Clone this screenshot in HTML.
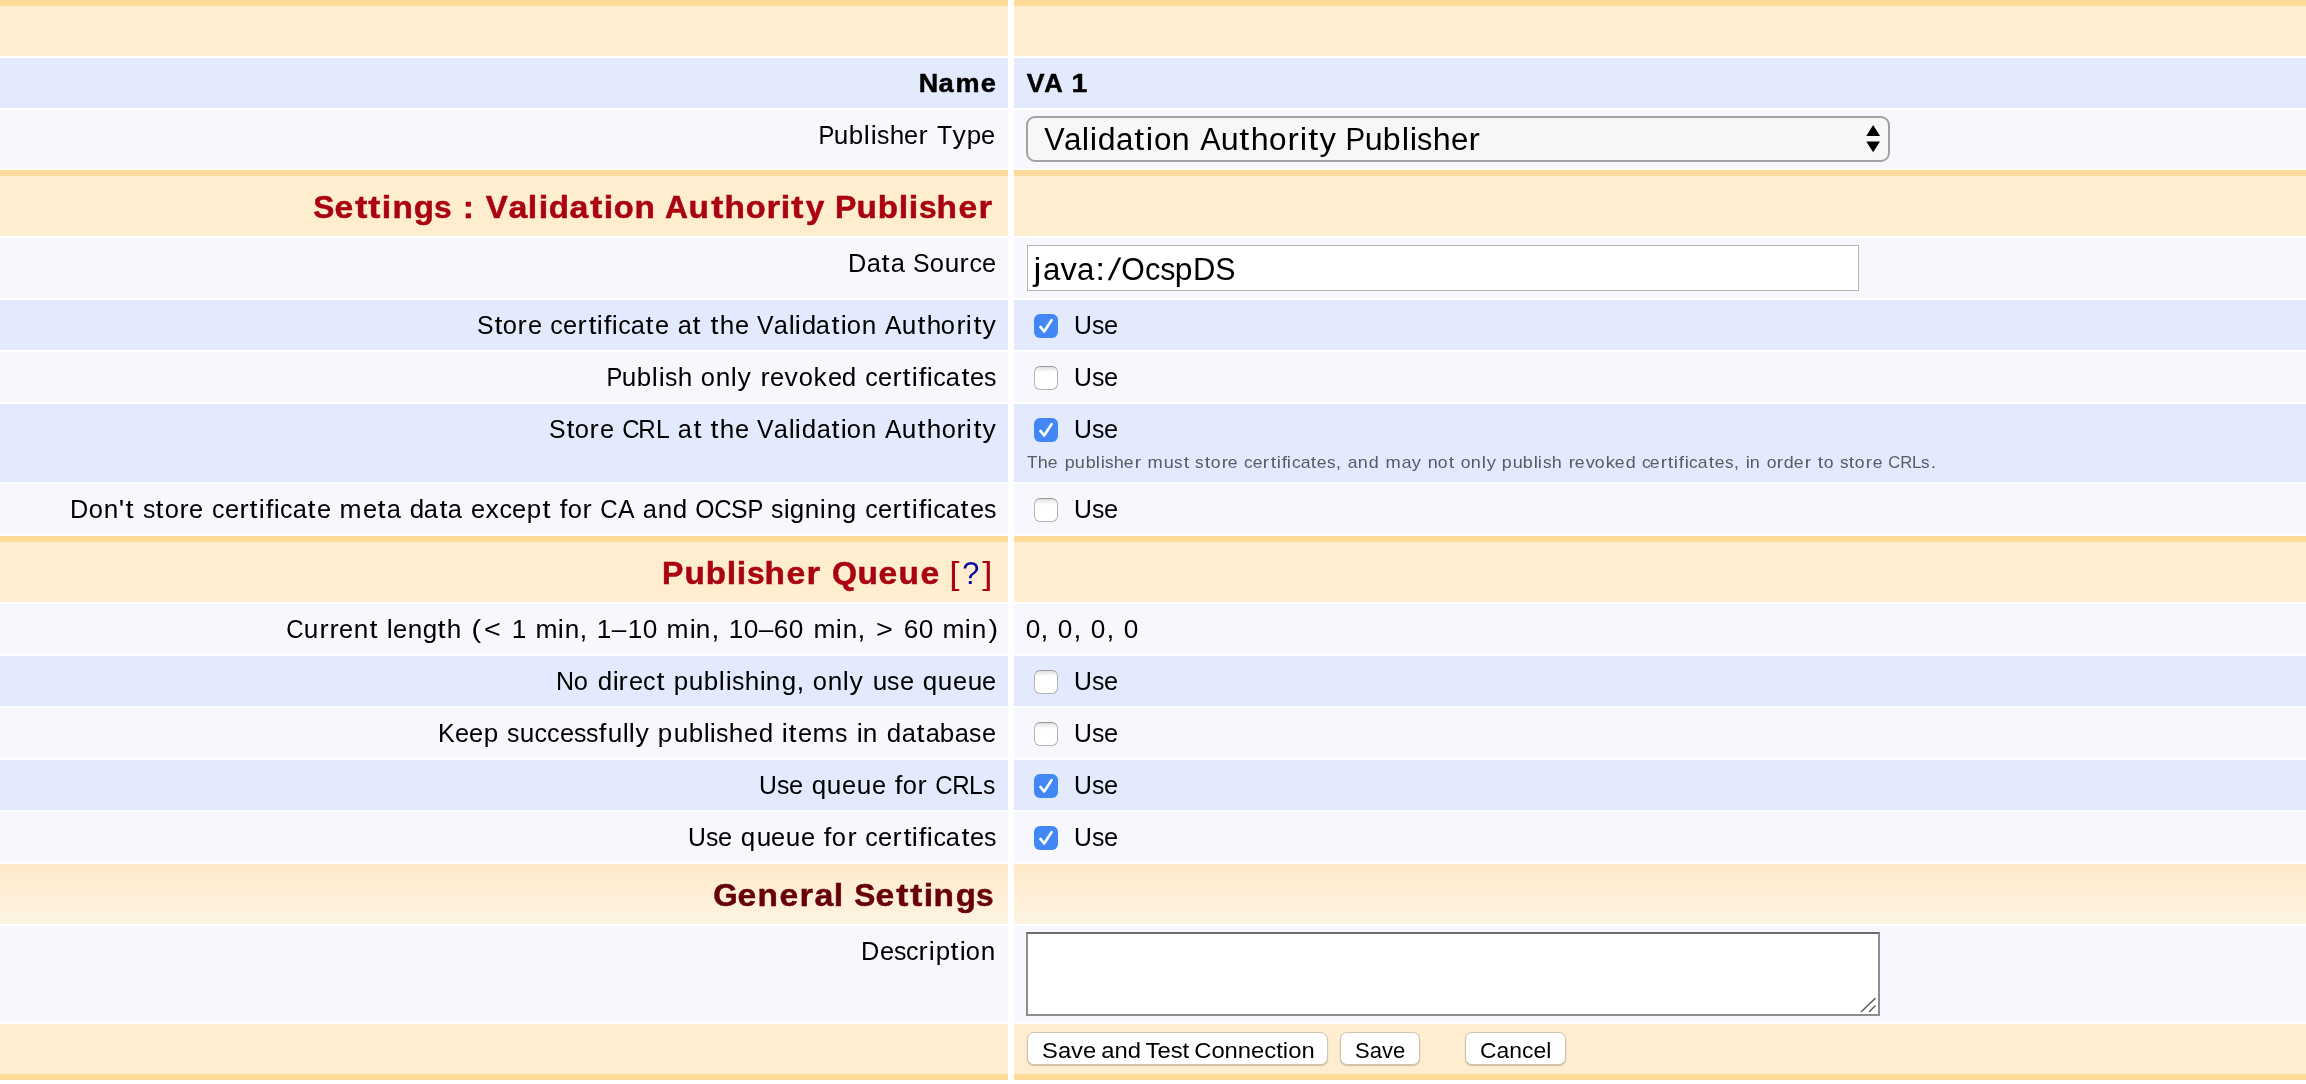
<!DOCTYPE html>
<html><head><meta charset="utf-8"><title>Edit Publisher</title>
<style>
html,body{margin:0;padding:0;background:#fff;}
body{width:2306px;height:1084px;position:relative;overflow:hidden;font-family:"Liberation Sans",sans-serif;}
body>div{position:absolute;}
.t{height:100px;line-height:100px;white-space:nowrap;will-change:transform;}
.t i{position:absolute;top:0;font-style:normal;transform-origin:center;}
</style></head><body>
<div style="left:0px;top:0px;width:1008px;height:6px;background:#FFDB9B"></div>
<div style="left:1014px;top:0px;width:1292px;height:6px;background:#FFDB9B"></div>
<div style="left:0px;top:6px;width:1008px;height:50px;background:#FEEDCF"></div>
<div style="left:1014px;top:6px;width:1292px;height:50px;background:#FEEDCF"></div>
<div style="left:0px;top:58px;width:1008px;height:50px;background:#E4EAFD"></div>
<div style="left:1014px;top:58px;width:1292px;height:50px;background:#E4EAFD"></div>
<div style="left:0px;top:110px;width:1008px;height:58px;background:#F6F8FE"></div>
<div style="left:1014px;top:110px;width:1292px;height:58px;background:#F6F8FE"></div>
<div style="left:0px;top:170px;width:1008px;height:6px;background:#FFDB9B"></div>
<div style="left:1014px;top:170px;width:1292px;height:6px;background:#FFDB9B"></div>
<div style="left:0px;top:176px;width:1008px;height:60px;background:#FEEDCF"></div>
<div style="left:1014px;top:176px;width:1292px;height:60px;background:#FEEDCF"></div>
<div style="left:0px;top:238px;width:1008px;height:60px;background:#F6F8FE"></div>
<div style="left:1014px;top:238px;width:1292px;height:60px;background:#F6F8FE"></div>
<div style="left:0px;top:300px;width:1008px;height:50px;background:#E4EAFD"></div>
<div style="left:1014px;top:300px;width:1292px;height:50px;background:#E4EAFD"></div>
<div style="left:0px;top:352px;width:1008px;height:50px;background:#F6F8FE"></div>
<div style="left:1014px;top:352px;width:1292px;height:50px;background:#F6F8FE"></div>
<div style="left:0px;top:404px;width:1008px;height:78px;background:#E4EAFD"></div>
<div style="left:1014px;top:404px;width:1292px;height:78px;background:#E4EAFD"></div>
<div style="left:0px;top:484px;width:1008px;height:50px;background:#F6F8FE"></div>
<div style="left:1014px;top:484px;width:1292px;height:50px;background:#F6F8FE"></div>
<div style="left:0px;top:536px;width:1008px;height:6px;background:#FFDB9B"></div>
<div style="left:1014px;top:536px;width:1292px;height:6px;background:#FFDB9B"></div>
<div style="left:0px;top:542px;width:1008px;height:60px;background:#FEEDCF"></div>
<div style="left:1014px;top:542px;width:1292px;height:60px;background:#FEEDCF"></div>
<div style="left:0px;top:604px;width:1008px;height:50px;background:#F6F8FE"></div>
<div style="left:1014px;top:604px;width:1292px;height:50px;background:#F6F8FE"></div>
<div style="left:0px;top:656px;width:1008px;height:50px;background:#E4EAFD"></div>
<div style="left:1014px;top:656px;width:1292px;height:50px;background:#E4EAFD"></div>
<div style="left:0px;top:708px;width:1008px;height:50px;background:#F6F8FE"></div>
<div style="left:1014px;top:708px;width:1292px;height:50px;background:#F6F8FE"></div>
<div style="left:0px;top:760px;width:1008px;height:50px;background:#E4EAFD"></div>
<div style="left:1014px;top:760px;width:1292px;height:50px;background:#E4EAFD"></div>
<div style="left:0px;top:812px;width:1008px;height:50px;background:#F6F8FE"></div>
<div style="left:1014px;top:812px;width:1292px;height:50px;background:#F6F8FE"></div>
<div style="left:0px;top:864px;width:1008px;height:60px;background:linear-gradient(#FEEACA,#FEF4E3)"></div>
<div style="left:1014px;top:864px;width:1292px;height:60px;background:linear-gradient(#FEEACA,#FEF4E3)"></div>
<div style="left:0px;top:926px;width:1008px;height:96px;background:#F6F8FE"></div>
<div style="left:1014px;top:926px;width:1292px;height:96px;background:#F6F8FE"></div>
<div style="left:0px;top:1024px;width:1008px;height:50px;background:#FEEDCF"></div>
<div style="left:1014px;top:1024px;width:1292px;height:50px;background:#FEEDCF"></div>
<div style="left:0px;top:1074px;width:1008px;height:6px;background:#FFDB9B"></div>
<div style="left:1014px;top:1074px;width:1292px;height:6px;background:#FFDB9B"></div>
<div style="left:1026px;top:116px;width:864px;height:46px;box-sizing:border-box;border:2px solid #A2A2A2;border-radius:9px;background:#F7F7F7"></div>
<svg style="position:absolute;left:1860px;top:120px" width="26" height="38"><path d="M6.3 16 L13.15 5 L20 16 Z M6.3 21.6 L20 21.6 L13.15 32.3 Z" fill="#000"/></svg>
<div style="left:1027px;top:245px;width:832px;height:46px;box-sizing:border-box;border:1px solid #B5B5B5;background:#fff"></div>
<div style="left:1034px;top:314px;width:24px;height:24px;background:#4188F6;border-radius:6px"></div>
<svg style="position:absolute;left:1034px;top:314px" width="24" height="24"><path d="M6.4 12.9 L10.2 17.5 L17.6 6.1" stroke="#fff" stroke-width="2.6" fill="none" stroke-linecap="round" stroke-linejoin="round"/></svg>
<div style="left:1034px;top:366px;width:24px;height:24px;box-sizing:border-box;border:1px solid #B4B4B4;border-top-color:#9C9C9C;background:linear-gradient(#DCDCDC,#F3F3F3 3px,#fff 6px);border-radius:6px"></div>
<div style="left:1034px;top:418px;width:24px;height:24px;background:#4188F6;border-radius:6px"></div>
<svg style="position:absolute;left:1034px;top:418px" width="24" height="24"><path d="M6.4 12.9 L10.2 17.5 L17.6 6.1" stroke="#fff" stroke-width="2.6" fill="none" stroke-linecap="round" stroke-linejoin="round"/></svg>
<div style="left:1034px;top:498px;width:24px;height:24px;box-sizing:border-box;border:1px solid #B4B4B4;border-top-color:#9C9C9C;background:linear-gradient(#DCDCDC,#F3F3F3 3px,#fff 6px);border-radius:6px"></div>
<div style="left:1034px;top:670px;width:24px;height:24px;box-sizing:border-box;border:1px solid #B4B4B4;border-top-color:#9C9C9C;background:linear-gradient(#DCDCDC,#F3F3F3 3px,#fff 6px);border-radius:6px"></div>
<div style="left:1034px;top:722px;width:24px;height:24px;box-sizing:border-box;border:1px solid #B4B4B4;border-top-color:#9C9C9C;background:linear-gradient(#DCDCDC,#F3F3F3 3px,#fff 6px);border-radius:6px"></div>
<div style="left:1034px;top:774px;width:24px;height:24px;background:#4188F6;border-radius:6px"></div>
<svg style="position:absolute;left:1034px;top:774px" width="24" height="24"><path d="M6.4 12.9 L10.2 17.5 L17.6 6.1" stroke="#fff" stroke-width="2.6" fill="none" stroke-linecap="round" stroke-linejoin="round"/></svg>
<div style="left:1034px;top:826px;width:24px;height:24px;background:#4188F6;border-radius:6px"></div>
<svg style="position:absolute;left:1034px;top:826px" width="24" height="24"><path d="M6.4 12.9 L10.2 17.5 L17.6 6.1" stroke="#fff" stroke-width="2.6" fill="none" stroke-linecap="round" stroke-linejoin="round"/></svg>
<div style="left:1026px;top:932px;width:854px;height:84px;box-sizing:border-box;border:2px solid #8E8E8E;border-top-color:#6C6C6C;background:#fff"></div>
<svg style="position:absolute;left:1858px;top:996px" width="20" height="18"><path d="M3.5 15.5 L17 2.5 M11.5 15.5 L17 10" stroke="#555" stroke-width="1.4" stroke-linecap="round"/></svg>
<div style="left:1027px;top:1032px;width:301px;height:33px;box-sizing:border-box;border:1px solid #CFC3AE;border-radius:7px;background:#fff;box-shadow:0 1px 1px rgba(120,100,70,0.35)"></div>
<div style="left:1340px;top:1032px;width:80px;height:33px;box-sizing:border-box;border:1px solid #CFC3AE;border-radius:7px;background:#fff;box-shadow:0 1px 1px rgba(120,100,70,0.35)"></div>
<div style="left:1465px;top:1032px;width:101px;height:33px;box-sizing:border-box;border:1px solid #CFC3AE;border-radius:7px;background:#fff;box-shadow:0 1px 1px rgba(120,100,70,0.35)"></div>
<div class="t" style="left:918.28px;top:33.00px;font-size:26px;font-weight:bold;color:#000;-webkit-text-stroke:0.5px"><i style="left:0.87px;transform:scaleX(1.033)">N</i><i style="left:21.47px;transform:scaleX(1.052)">a</i><i style="left:38.12px;transform:scaleX(1.040)">m</i><i style="left:63.33px;transform:scaleX(1.045)">e</i></div>
<div class="t" style="left:1026.65px;top:33.00px;font-size:26px;font-weight:bold;color:#000;-webkit-text-stroke:0.5px"><i style="left:0.19px;transform:scaleX(1.022)">V</i><i style="left:17.23px;transform:scaleX(0.984)">A</i><i style="left:44.71px;transform:scaleX(1.086)">1</i></div>
<div class="t" style="left:819.45px;top:85.00px;font-size:25px;font-weight:normal;color:#000"><i style="left:-1.09px;transform:scaleX(0.950)">P</i><i style="left:15.14px;transform:scaleX(1.045)">u</i><i style="left:30.22px;transform:scaleX(1.037)">b</i><i style="left:45.13px;transform:scaleX(1.083)">l</i><i style="left:51.65px;transform:scaleX(1.083)">i</i><i style="left:57.59px;transform:scaleX(0.991)">s</i><i style="left:70.63px;transform:scaleX(1.045)">h</i><i style="left:85.38px;transform:scaleX(1.014)">e</i><i style="left:100.37px;transform:scaleX(1.101)">r</i><i style="left:117.81px;transform:scaleX(0.986)">T</i><i style="left:133.70px;transform:scaleX(1.064)">y</i><i style="left:147.56px;transform:scaleX(1.037)">p</i><i style="left:162.19px;transform:scaleX(1.014)">e</i></div>
<div class="t" style="left:1044.39px;top:90.00px;font-size:31px;font-weight:normal;color:#000"><i style="left:-0.27px;transform:scaleX(0.986)">V</i><i style="left:20.35px;transform:scaleX(1.012)">a</i><i style="left:38.36px;transform:scaleX(1.076)">l</i><i style="left:46.35px;transform:scaleX(1.076)">i</i><i style="left:54.34px;transform:scaleX(1.031)">d</i><i style="left:72.34px;transform:scaleX(1.012)">a</i><i style="left:91.29px;transform:scaleX(1.150)">t</i><i style="left:101.95px;transform:scaleX(1.076)">i</i><i style="left:109.63px;transform:scaleX(1.013)">o</i><i style="left:127.81px;transform:scaleX(1.039)">n</i><i style="left:155.82px;transform:scaleX(0.986)">A</i><i style="left:176.92px;transform:scaleX(1.039)">u</i><i style="left:196.35px;transform:scaleX(1.150)">t</i><i style="left:207.15px;transform:scaleX(1.039)">h</i><i style="left:225.33px;transform:scaleX(1.013)">o</i><i style="left:243.84px;transform:scaleX(1.094)">r</i><i style="left:255.74px;transform:scaleX(1.076)">i</i><i style="left:264.68px;transform:scaleX(1.150)">t</i><i style="left:275.71px;transform:scaleX(1.058)">y</i><i style="left:301.04px;transform:scaleX(0.950)">P</i><i style="left:320.96px;transform:scaleX(1.039)">u</i><i style="left:339.44px;transform:scaleX(1.031)">b</i><i style="left:357.79px;transform:scaleX(1.076)">l</i><i style="left:365.78px;transform:scaleX(1.076)">i</i><i style="left:373.00px;transform:scaleX(0.985)">s</i><i style="left:388.98px;transform:scaleX(1.039)">h</i><i style="left:407.06px;transform:scaleX(1.008)">e</i><i style="left:425.47px;transform:scaleX(1.094)">r</i></div>
<div class="t" style="left:313.41px;top:157.00px;font-size:32px;font-weight:bold;color:#A9030F;-webkit-text-stroke:0.5px"><i style="left:-0.16px;transform:scaleX(0.988)">S</i><i style="left:22.09px;transform:scaleX(1.053)">e</i><i style="left:42.56px;transform:scaleX(1.136)">t</i><i style="left:56.44px;transform:scaleX(1.136)">t</i><i style="left:69.33px;transform:scaleX(1.063)">i</i><i style="left:79.78px;transform:scaleX(1.042)">n</i><i style="left:101.00px;transform:scaleX(1.032)">g</i><i style="left:121.18px;transform:scaleX(0.990)">s</i><i style="left:149.99px;transform:scaleX(1.058)">:</i><i style="left:172.51px;transform:scaleX(1.030)">V</i><i style="left:195.79px;transform:scaleX(1.060)">a</i><i style="left:215.40px;transform:scaleX(1.063)">l</i><i style="left:225.54px;transform:scaleX(1.063)">i</i><i style="left:235.79px;transform:scaleX(1.032)">d</i><i style="left:257.26px;transform:scaleX(1.060)">a</i><i style="left:277.86px;transform:scaleX(1.136)">t</i><i style="left:290.75px;transform:scaleX(1.063)">i</i><i style="left:300.73px;transform:scaleX(1.019)">o</i><i style="left:321.68px;transform:scaleX(1.042)">n</i><i style="left:352.49px;transform:scaleX(0.992)">A</i><i style="left:376.46px;transform:scaleX(1.042)">u</i><i style="left:398.55px;transform:scaleX(1.136)">t</i><i style="left:411.75px;transform:scaleX(1.042)">h</i><i style="left:432.70px;transform:scaleX(1.019)">o</i><i style="left:453.95px;transform:scaleX(1.091)">r</i><i style="left:468.28px;transform:scaleX(1.063)">i</i><i style="left:479.40px;transform:scaleX(1.136)">t</i><i style="left:492.53px;transform:scaleX(1.042)">y</i><i style="left:521.73px;transform:scaleX(1.001)">P</i><i style="left:544.13px;transform:scaleX(1.042)">u</i><i style="left:565.35px;transform:scaleX(1.032)">b</i><i style="left:586.26px;transform:scaleX(1.063)">l</i><i style="left:596.40px;transform:scaleX(1.063)">i</i><i style="left:605.81px;transform:scaleX(0.990)">s</i><i style="left:624.44px;transform:scaleX(1.042)">h</i><i style="left:645.98px;transform:scaleX(1.053)">e</i><i style="left:666.08px;transform:scaleX(1.091)">r</i></div>
<div class="t" style="left:847.72px;top:213.00px;font-size:25px;font-weight:normal;color:#000"><i style="left:0.24px;transform:scaleX(1.012)">D</i><i style="left:18.79px;transform:scaleX(1.018)">a</i><i style="left:34.22px;transform:scaleX(1.150)">t</i><i style="left:42.68px;transform:scaleX(1.018)">a</i><i style="left:65.18px;transform:scaleX(0.992)">S</i><i style="left:82.02px;transform:scaleX(1.019)">o</i><i style="left:96.86px;transform:scaleX(1.045)">u</i><i style="left:112.30px;transform:scaleX(1.101)">r</i><i style="left:121.53px;transform:scaleX(1.000)">c</i><i style="left:134.25px;transform:scaleX(1.014)">e</i></div>
<div class="t" style="left:1032.97px;top:220.00px;font-size:31px;font-weight:normal;color:#000"><i style="left:1.36px;transform:scaleX(1.150)">j</i><i style="left:9.69px;transform:scaleX(1.005)">a</i><i style="left:27.84px;transform:scaleX(1.051)">v</i><i style="left:44.25px;transform:scaleX(1.005)">a</i><i style="left:63.46px;transform:scaleX(1.150)">:</i><i style="left:77.18px;transform:scaleX(1.150) skewX(-8deg)">/</i><i style="left:88.42px;transform:scaleX(0.974)">O</i><i style="left:111.73px;transform:scaleX(0.987)">c</i><i style="left:126.73px;transform:scaleX(0.978)">s</i><i style="left:142.34px;transform:scaleX(1.024)">p</i><i style="left:160.01px;transform:scaleX(0.999)">D</i><i style="left:181.99px;transform:scaleX(0.979)">S</i></div>
<div class="t" style="left:476.72px;top:275.00px;font-size:25px;font-weight:normal;color:#000"><i style="left:-0.11px;transform:scaleX(0.992)">S</i><i style="left:17.72px;transform:scaleX(1.150)">t</i><i style="left:26.21px;transform:scaleX(1.019)">o</i><i style="left:41.30px;transform:scaleX(1.101)">r</i><i style="left:50.73px;transform:scaleX(1.014)">e</i><i style="left:73.31px;transform:scaleX(1.000)">c</i><i style="left:86.04px;transform:scaleX(1.014)">e</i><i style="left:101.04px;transform:scaleX(1.101)">r</i><i style="left:111.53px;transform:scaleX(1.150)">t</i><i style="left:120.23px;transform:scaleX(1.083)">i</i><i style="left:127.02px;transform:scaleX(1.102)">f</i><i style="left:135.21px;transform:scaleX(1.083)">i</i><i style="left:141.27px;transform:scaleX(1.000)">c</i><i style="left:154.04px;transform:scaleX(1.018)">a</i><i style="left:169.48px;transform:scaleX(1.150)">t</i><i style="left:177.90px;transform:scaleX(1.014)">e</i><i style="left:200.73px;transform:scaleX(1.018)">a</i><i style="left:216.17px;transform:scaleX(1.150)">t</i><i style="left:234.10px;transform:scaleX(1.150)">t</i><i style="left:242.97px;transform:scaleX(1.045)">h</i><i style="left:257.74px;transform:scaleX(1.014)">e</i><i style="left:280.19px;transform:scaleX(0.992)">V</i><i style="left:297.02px;transform:scaleX(1.018)">a</i><i style="left:311.68px;transform:scaleX(1.083)">l</i><i style="left:318.21px;transform:scaleX(1.083)">i</i><i style="left:324.79px;transform:scaleX(1.037)">d</i><i style="left:339.49px;transform:scaleX(1.018)">a</i><i style="left:354.93px;transform:scaleX(1.150)">t</i><i style="left:363.63px;transform:scaleX(1.083)">i</i><i style="left:369.96px;transform:scaleX(1.019)">o</i><i style="left:384.80px;transform:scaleX(1.045)">n</i><i style="left:407.71px;transform:scaleX(0.992)">A</i><i style="left:424.93px;transform:scaleX(1.045)">u</i><i style="left:440.75px;transform:scaleX(1.150)">t</i><i style="left:449.62px;transform:scaleX(1.045)">h</i><i style="left:464.47px;transform:scaleX(1.019)">o</i><i style="left:479.55px;transform:scaleX(1.101)">r</i><i style="left:489.26px;transform:scaleX(1.083)">i</i><i style="left:496.57px;transform:scaleX(1.150)">t</i><i style="left:505.62px;transform:scaleX(1.064)">y</i></div>
<div class="t" style="left:607.48px;top:327.00px;font-size:25px;font-weight:normal;color:#000"><i style="left:-1.07px;transform:scaleX(0.950)">P</i><i style="left:15.21px;transform:scaleX(1.045)">u</i><i style="left:30.34px;transform:scaleX(1.037)">b</i><i style="left:45.30px;transform:scaleX(1.083)">l</i><i style="left:51.84px;transform:scaleX(1.083)">i</i><i style="left:57.80px;transform:scaleX(0.991)">s</i><i style="left:70.89px;transform:scaleX(1.045)">h</i><i style="left:94.23px;transform:scaleX(1.019)">o</i><i style="left:109.11px;transform:scaleX(1.045)">n</i><i style="left:124.18px;transform:scaleX(1.083)">l</i><i style="left:131.08px;transform:scaleX(1.064)">y</i><i style="left:153.81px;transform:scaleX(1.101)">r</i><i style="left:163.27px;transform:scaleX(1.014)">e</i><i style="left:178.25px;transform:scaleX(1.064)">v</i><i style="left:191.91px;transform:scaleX(1.019)">o</i><i style="left:206.97px;transform:scaleX(1.064)">k</i><i style="left:220.55px;transform:scaleX(1.014)">e</i><i style="left:235.23px;transform:scaleX(1.037)">d</i><i style="left:258.19px;transform:scaleX(1.000)">c</i><i style="left:270.94px;transform:scaleX(1.014)">e</i><i style="left:285.97px;transform:scaleX(1.101)">r</i><i style="left:296.47px;transform:scaleX(1.150)">t</i><i style="left:305.19px;transform:scaleX(1.083)">i</i><i style="left:312.00px;transform:scaleX(1.102)">f</i><i style="left:320.20px;transform:scaleX(1.083)">i</i><i style="left:326.27px;transform:scaleX(1.000)">c</i><i style="left:339.08px;transform:scaleX(1.018)">a</i><i style="left:354.54px;transform:scaleX(1.150)">t</i><i style="left:362.98px;transform:scaleX(1.014)">e</i><i style="left:377.02px;transform:scaleX(0.991)">s</i></div>
<div class="t" style="left:548.89px;top:379.00px;font-size:25px;font-weight:normal;color:#000"><i style="left:-0.12px;transform:scaleX(0.992)">S</i><i style="left:17.70px;transform:scaleX(1.150)">t</i><i style="left:26.18px;transform:scaleX(1.019)">o</i><i style="left:41.26px;transform:scaleX(1.101)">r</i><i style="left:50.67px;transform:scaleX(1.014)">e</i><i style="left:72.59px;transform:scaleX(0.963)">C</i><i style="left:89.39px;transform:scaleX(0.965)">R</i><i style="left:106.66px;transform:scaleX(0.987)">L</i><i style="left:129.09px;transform:scaleX(1.018)">a</i><i style="left:144.51px;transform:scaleX(1.150)">t</i><i style="left:162.43px;transform:scaleX(1.150)">t</i><i style="left:171.28px;transform:scaleX(1.045)">h</i><i style="left:186.04px;transform:scaleX(1.014)">e</i><i style="left:208.48px;transform:scaleX(0.992)">V</i><i style="left:225.29px;transform:scaleX(1.018)">a</i><i style="left:239.93px;transform:scaleX(1.083)">l</i><i style="left:246.46px;transform:scaleX(1.083)">i</i><i style="left:253.03px;transform:scaleX(1.037)">d</i><i style="left:267.72px;transform:scaleX(1.018)">a</i><i style="left:283.14px;transform:scaleX(1.150)">t</i><i style="left:291.83px;transform:scaleX(1.083)">i</i><i style="left:298.15px;transform:scaleX(1.019)">o</i><i style="left:312.99px;transform:scaleX(1.045)">n</i><i style="left:335.87px;transform:scaleX(0.992)">A</i><i style="left:353.07px;transform:scaleX(1.045)">u</i><i style="left:368.89px;transform:scaleX(1.150)">t</i><i style="left:377.74px;transform:scaleX(1.045)">h</i><i style="left:392.58px;transform:scaleX(1.019)">o</i><i style="left:407.65px;transform:scaleX(1.101)">r</i><i style="left:417.35px;transform:scaleX(1.083)">i</i><i style="left:424.65px;transform:scaleX(1.150)">t</i><i style="left:433.69px;transform:scaleX(1.064)">y</i></div>
<div class="t" style="left:1027.30px;top:413.00px;font-size:17px;font-weight:normal;color:#575C62"><i style="left:0.02px;transform:scaleX(1.000)">T</i><i style="left:11.02px;transform:scaleX(1.060)">h</i><i style="left:21.37px;transform:scaleX(1.029)">e</i><i style="left:37.56px;transform:scaleX(1.052)">p</i><i style="left:48.14px;transform:scaleX(1.060)">u</i><i style="left:58.72px;transform:scaleX(1.052)">b</i><i style="left:69.09px;transform:scaleX(1.099)">l</i><i style="left:73.66px;transform:scaleX(1.099)">i</i><i style="left:77.90px;transform:scaleX(1.006)">s</i><i style="left:87.06px;transform:scaleX(1.060)">h</i><i style="left:97.41px;transform:scaleX(1.029)">e</i><i style="left:107.87px;transform:scaleX(1.117)">r</i><i style="left:121.27px;transform:scaleX(1.074)">m</i><i style="left:137.15px;transform:scaleX(1.060)">u</i><i style="left:147.27px;transform:scaleX(1.006)">s</i><i style="left:156.78px;transform:scaleX(1.150)">t</i><i style="left:168.45px;transform:scaleX(1.006)">s</i><i style="left:177.97px;transform:scaleX(1.150)">t</i><i style="left:183.99px;transform:scaleX(1.034)">o</i><i style="left:194.50px;transform:scaleX(1.117)">r</i><i style="left:201.16px;transform:scaleX(1.029)">e</i><i style="left:216.97px;transform:scaleX(1.015)">c</i><i style="left:225.90px;transform:scaleX(1.029)">e</i><i style="left:236.36px;transform:scaleX(1.117)">r</i><i style="left:243.69px;transform:scaleX(1.150)">t</i><i style="left:249.77px;transform:scaleX(1.099)">i</i><i style="left:254.54px;transform:scaleX(1.118)">f</i><i style="left:260.26px;transform:scaleX(1.099)">i</i><i style="left:264.58px;transform:scaleX(1.015)">c</i><i style="left:273.55px;transform:scaleX(1.033)">a</i><i style="left:284.29px;transform:scaleX(1.150)">t</i><i style="left:290.26px;transform:scaleX(1.029)">e</i><i style="left:300.06px;transform:scaleX(1.006)">s</i><i style="left:309.31px;transform:scaleX(1.135)">,</i><i style="left:320.98px;transform:scaleX(1.033)">a</i><i style="left:331.36px;transform:scaleX(1.060)">n</i><i style="left:341.94px;transform:scaleX(1.052)">d</i><i style="left:358.95px;transform:scaleX(1.074)">m</i><i style="left:374.55px;transform:scaleX(1.033)">a</i><i style="left:385.05px;transform:scaleX(1.080)">y</i><i style="left:400.80px;transform:scaleX(1.060)">n</i><i style="left:411.20px;transform:scaleX(1.034)">o</i><i style="left:421.96px;transform:scaleX(1.150)">t</i><i style="left:433.90px;transform:scaleX(1.034)">o</i><i style="left:444.31px;transform:scaleX(1.060)">n</i><i style="left:454.76px;transform:scaleX(1.099)">l</i><i style="left:459.66px;transform:scaleX(1.080)">y</i><i style="left:475.32px;transform:scaleX(1.052)">p</i><i style="left:485.90px;transform:scaleX(1.060)">u</i><i style="left:496.48px;transform:scaleX(1.052)">b</i><i style="left:506.85px;transform:scaleX(1.099)">l</i><i style="left:511.43px;transform:scaleX(1.099)">i</i><i style="left:515.66px;transform:scaleX(1.006)">s</i><i style="left:524.83px;transform:scaleX(1.060)">h</i><i style="left:541.52px;transform:scaleX(1.117)">r</i><i style="left:548.18px;transform:scaleX(1.029)">e</i><i style="left:558.65px;transform:scaleX(1.080)">v</i><i style="left:568.21px;transform:scaleX(1.034)">o</i><i style="left:578.73px;transform:scaleX(1.080)">k</i><i style="left:588.24px;transform:scaleX(1.029)">e</i><i style="left:598.50px;transform:scaleX(1.052)">d</i><i style="left:614.54px;transform:scaleX(1.015)">c</i><i style="left:623.47px;transform:scaleX(1.029)">e</i><i style="left:633.93px;transform:scaleX(1.117)">r</i><i style="left:641.26px;transform:scaleX(1.150)">t</i><i style="left:647.34px;transform:scaleX(1.099)">i</i><i style="left:652.11px;transform:scaleX(1.118)">f</i><i style="left:657.83px;transform:scaleX(1.099)">i</i><i style="left:662.15px;transform:scaleX(1.015)">c</i><i style="left:671.11px;transform:scaleX(1.033)">a</i><i style="left:681.85px;transform:scaleX(1.150)">t</i><i style="left:687.83px;transform:scaleX(1.029)">e</i><i style="left:697.63px;transform:scaleX(1.006)">s</i><i style="left:706.88px;transform:scaleX(1.135)">,</i><i style="left:718.62px;transform:scaleX(1.099)">i</i><i style="left:723.40px;transform:scaleX(1.060)">n</i><i style="left:739.72px;transform:scaleX(1.034)">o</i><i style="left:750.23px;transform:scaleX(1.117)">r</i><i style="left:757.13px;transform:scaleX(1.052)">d</i><i style="left:767.39px;transform:scaleX(1.029)">e</i><i style="left:777.85px;transform:scaleX(1.117)">r</i><i style="left:791.10px;transform:scaleX(1.150)">t</i><i style="left:797.13px;transform:scaleX(1.034)">o</i><i style="left:812.91px;transform:scaleX(1.006)">s</i><i style="left:822.43px;transform:scaleX(1.150)">t</i><i style="left:828.45px;transform:scaleX(1.034)">o</i><i style="left:838.96px;transform:scaleX(1.117)">r</i><i style="left:845.63px;transform:scaleX(1.029)">e</i><i style="left:861.04px;transform:scaleX(0.977)">C</i><i style="left:872.82px;transform:scaleX(0.979)">R</i><i style="left:884.89px;transform:scaleX(1.001)">L</i><i style="left:894.43px;transform:scaleX(1.006)">s</i><i style="left:903.68px;transform:scaleX(1.135)">.</i></div>
<div class="t" style="left:70.49px;top:459.00px;font-size:25px;font-weight:normal;color:#000"><i style="left:0.25px;transform:scaleX(1.012)">D</i><i style="left:18.84px;transform:scaleX(1.019)">o</i><i style="left:33.70px;transform:scaleX(1.045)">n</i><i style="left:49.12px;transform:scaleX(1.150)">'</i><i style="left:56.02px;transform:scaleX(1.150)">t</i><i style="left:72.60px;transform:scaleX(0.991)">s</i><i style="left:86.28px;transform:scaleX(1.150)">t</i><i style="left:94.78px;transform:scaleX(1.019)">o</i><i style="left:109.87px;transform:scaleX(1.101)">r</i><i style="left:119.30px;transform:scaleX(1.014)">e</i><i style="left:141.90px;transform:scaleX(1.000)">c</i><i style="left:154.63px;transform:scaleX(1.014)">e</i><i style="left:169.64px;transform:scaleX(1.101)">r</i><i style="left:180.13px;transform:scaleX(1.150)">t</i><i style="left:188.83px;transform:scaleX(1.083)">i</i><i style="left:195.63px;transform:scaleX(1.102)">f</i><i style="left:203.82px;transform:scaleX(1.083)">i</i><i style="left:209.88px;transform:scaleX(1.000)">c</i><i style="left:222.67px;transform:scaleX(1.018)">a</i><i style="left:238.10px;transform:scaleX(1.150)">t</i><i style="left:246.53px;transform:scaleX(1.014)">e</i><i style="left:270.39px;transform:scaleX(1.058)">m</i><i style="left:292.71px;transform:scaleX(1.014)">e</i><i style="left:308.10px;transform:scaleX(1.150)">t</i><i style="left:316.58px;transform:scaleX(1.018)">a</i><i style="left:339.75px;transform:scaleX(1.037)">d</i><i style="left:354.46px;transform:scaleX(1.018)">a</i><i style="left:369.90px;transform:scaleX(1.150)">t</i><i style="left:378.38px;transform:scaleX(1.018)">a</i><i style="left:401.23px;transform:scaleX(1.014)">e</i><i style="left:416.19px;transform:scaleX(1.064)">x</i><i style="left:429.55px;transform:scaleX(1.000)">c</i><i style="left:442.29px;transform:scaleX(1.014)">e</i><i style="left:456.95px;transform:scaleX(1.037)">p</i><i style="left:472.66px;transform:scaleX(1.150)">t</i><i style="left:490.09px;transform:scaleX(1.102)">f</i><i style="left:498.08px;transform:scaleX(1.019)">o</i><i style="left:513.17px;transform:scaleX(1.101)">r</i><i style="left:530.22px;transform:scaleX(0.963)">C</i><i style="left:547.54px;transform:scaleX(0.992)">A</i><i style="left:572.83px;transform:scaleX(1.018)">a</i><i style="left:587.67px;transform:scaleX(1.045)">n</i><i style="left:602.77px;transform:scaleX(1.037)">d</i><i style="left:625.44px;transform:scaleX(0.986)">O</i><i style="left:644.01px;transform:scaleX(0.963)">C</i><i style="left:661.33px;transform:scaleX(0.992)">S</i><i style="left:676.82px;transform:scaleX(0.950)">P</i><i style="left:700.78px;transform:scaleX(0.991)">s</i><i style="left:713.68px;transform:scaleX(1.083)">i</i><i style="left:720.26px;transform:scaleX(1.037)">g</i><i style="left:735.37px;transform:scaleX(1.045)">n</i><i style="left:750.42px;transform:scaleX(1.083)">i</i><i style="left:757.13px;transform:scaleX(1.045)">n</i><i style="left:772.24px;transform:scaleX(1.037)">g</i><i style="left:795.16px;transform:scaleX(1.000)">c</i><i style="left:807.89px;transform:scaleX(1.014)">e</i><i style="left:822.90px;transform:scaleX(1.101)">r</i><i style="left:833.39px;transform:scaleX(1.150)">t</i><i style="left:842.09px;transform:scaleX(1.083)">i</i><i style="left:848.89px;transform:scaleX(1.102)">f</i><i style="left:857.08px;transform:scaleX(1.083)">i</i><i style="left:863.14px;transform:scaleX(1.000)">c</i><i style="left:875.93px;transform:scaleX(1.018)">a</i><i style="left:891.37px;transform:scaleX(1.150)">t</i><i style="left:899.79px;transform:scaleX(1.014)">e</i><i style="left:913.82px;transform:scaleX(0.991)">s</i></div>
<div class="t" style="left:662.07px;top:523.00px;font-size:32px;font-weight:bold;color:#A9030F;-webkit-text-stroke:0.5px"><i style="left:0.18px;transform:scaleX(1.001)">P</i><i style="left:22.69px;transform:scaleX(1.042)">u</i><i style="left:44.02px;transform:scaleX(1.032)">b</i><i style="left:65.00px;transform:scaleX(1.063)">l</i><i style="left:75.19px;transform:scaleX(1.063)">i</i><i style="left:84.67px;transform:scaleX(0.990)">s</i><i style="left:103.40px;transform:scaleX(1.042)">h</i><i style="left:125.04px;transform:scaleX(1.053)">e</i><i style="left:145.23px;transform:scaleX(1.091)">r</i><i style="left:169.66px;transform:scaleX(1.002)">Q</i><i style="left:195.77px;transform:scaleX(1.042)">u</i><i style="left:217.41px;transform:scaleX(1.053)">e</i><i style="left:237.30px;transform:scaleX(1.042)">u</i><i style="left:258.95px;transform:scaleX(1.053)">e</i></div>
<div class="t" style="left:947.29px;top:523.00px;font-size:32px;font-weight:normal;color:#A9030F"><i style="left:3.45px;transform:scaleX(1.150)">[</i><i style="left:15.22px;transform:scaleX(0.960);color:#0606A4">?</i><i style="left:35.89px;transform:scaleX(1.150)">]</i></div>
<div class="t" style="left:287.07px;top:579.00px;font-size:25px;font-weight:normal;color:#000"><i style="left:-0.67px;transform:scaleX(0.963)">C</i><i style="left:17.33px;transform:scaleX(1.045)">u</i><i style="left:32.72px;transform:scaleX(1.101)">r</i><i style="left:42.78px;transform:scaleX(1.101)">r</i><i style="left:52.15px;transform:scaleX(1.014)">e</i><i style="left:66.86px;transform:scaleX(1.045)">n</i><i style="left:82.62px;transform:scaleX(1.150)">t</i><i style="left:99.70px;transform:scaleX(1.083)">l</i><i style="left:105.90px;transform:scaleX(1.014)">e</i><i style="left:120.60px;transform:scaleX(1.045)">n</i><i style="left:135.63px;transform:scaleX(1.037)">g</i><i style="left:151.28px;transform:scaleX(1.150)">t</i><i style="left:160.09px;transform:scaleX(1.045)">h</i><i style="left:185.07px;transform:scaleX(1.150)">(</i><i style="left:198.17px;transform:scaleX(1.150)">&lt;</i><i style="left:224.57px;transform:scaleX(1.048)">1</i><i style="left:248.77px;transform:scaleX(1.058)">m</i><i style="left:271.29px;transform:scaleX(1.083)">i</i><i style="left:277.94px;transform:scaleX(1.045)">n</i><i style="left:293.32px;transform:scaleX(1.119)">,</i><i style="left:310.21px;transform:scaleX(1.048)">1</i><i style="left:325.43px;transform:scaleX(1.048)">–</i><i style="left:340.66px;transform:scaleX(1.048)">1</i><i style="left:355.89px;transform:scaleX(1.048)">0</i><i style="left:380.09px;transform:scaleX(1.058)">m</i><i style="left:402.60px;transform:scaleX(1.083)">i</i><i style="left:409.25px;transform:scaleX(1.045)">n</i><i style="left:424.64px;transform:scaleX(1.119)">,</i><i style="left:441.52px;transform:scaleX(1.048)">1</i><i style="left:456.75px;transform:scaleX(1.048)">0</i><i style="left:471.97px;transform:scaleX(1.048)">–</i><i style="left:487.20px;transform:scaleX(1.048)">6</i><i style="left:502.43px;transform:scaleX(1.048)">0</i><i style="left:526.63px;transform:scaleX(1.058)">m</i><i style="left:549.14px;transform:scaleX(1.083)">i</i><i style="left:555.79px;transform:scaleX(1.045)">n</i><i style="left:571.18px;transform:scaleX(1.119)">,</i><i style="left:590.13px;transform:scaleX(1.150)">&gt;</i><i style="left:616.53px;transform:scaleX(1.048)">6</i><i style="left:631.75px;transform:scaleX(1.048)">0</i><i style="left:655.95px;transform:scaleX(1.058)">m</i><i style="left:678.47px;transform:scaleX(1.083)">i</i><i style="left:685.12px;transform:scaleX(1.045)">n</i><i style="left:701.69px;transform:scaleX(1.150)">)</i></div>
<div class="t" style="left:1025.37px;top:579.00px;font-size:25px;font-weight:normal;color:#000"><i style="left:0.75px;transform:scaleX(1.048)">0</i><i style="left:16.32px;transform:scaleX(1.119)">,</i><i style="left:33.43px;transform:scaleX(1.048)">0</i><i style="left:49.00px;transform:scaleX(1.119)">,</i><i style="left:66.12px;transform:scaleX(1.048)">0</i><i style="left:81.69px;transform:scaleX(1.119)">,</i><i style="left:98.81px;transform:scaleX(1.048)">0</i></div>
<div class="t" style="left:555.95px;top:631.00px;font-size:25px;font-weight:normal;color:#000"><i style="left:0.02px;transform:scaleX(1.000)">N</i><i style="left:18.38px;transform:scaleX(1.019)">o</i><i style="left:41.57px;transform:scaleX(1.037)">d</i><i style="left:56.51px;transform:scaleX(1.083)">i</i><i style="left:63.45px;transform:scaleX(1.101)">r</i><i style="left:72.88px;transform:scaleX(1.014)">e</i><i style="left:87.02px;transform:scaleX(1.000)">c</i><i style="left:100.80px;transform:scaleX(1.150)">t</i><i style="left:118.01px;transform:scaleX(1.037)">p</i><i style="left:133.12px;transform:scaleX(1.045)">u</i><i style="left:148.23px;transform:scaleX(1.037)">b</i><i style="left:163.16px;transform:scaleX(1.083)">l</i><i style="left:169.69px;transform:scaleX(1.083)">i</i><i style="left:175.64px;transform:scaleX(0.991)">s</i><i style="left:188.71px;transform:scaleX(1.045)">h</i><i style="left:203.76px;transform:scaleX(1.083)">i</i><i style="left:210.46px;transform:scaleX(1.045)">n</i><i style="left:225.57px;transform:scaleX(1.037)">g</i><i style="left:240.90px;transform:scaleX(1.119)">,</i><i style="left:257.48px;transform:scaleX(1.019)">o</i><i style="left:272.33px;transform:scaleX(1.045)">n</i><i style="left:287.39px;transform:scaleX(1.083)">l</i><i style="left:294.27px;transform:scaleX(1.064)">y</i><i style="left:316.74px;transform:scaleX(1.045)">u</i><i style="left:331.21px;transform:scaleX(0.991)">s</i><i style="left:343.83px;transform:scaleX(1.014)">e</i><i style="left:366.94px;transform:scaleX(1.037)">q</i><i style="left:382.05px;transform:scaleX(1.045)">u</i><i style="left:396.83px;transform:scaleX(1.014)">e</i><i style="left:411.61px;transform:scaleX(1.045)">u</i><i style="left:426.38px;transform:scaleX(1.014)">e</i></div>
<div class="t" style="left:437.92px;top:683.00px;font-size:25px;font-weight:normal;color:#000"><i style="left:-0.02px;transform:scaleX(0.997)">K</i><i style="left:16.86px;transform:scaleX(1.014)">e</i><i style="left:31.21px;transform:scaleX(1.014)">e</i><i style="left:45.88px;transform:scaleX(1.037)">p</i><i style="left:68.71px;transform:scaleX(0.991)">s</i><i style="left:81.79px;transform:scaleX(1.045)">u</i><i style="left:96.39px;transform:scaleX(1.000)">c</i><i style="left:108.94px;transform:scaleX(1.000)">c</i><i style="left:121.68px;transform:scaleX(1.014)">e</i><i style="left:135.72px;transform:scaleX(0.991)">s</i><i style="left:148.04px;transform:scaleX(0.991)">s</i><i style="left:161.21px;transform:scaleX(1.102)">f</i><i style="left:169.59px;transform:scaleX(1.045)">u</i><i style="left:184.65px;transform:scaleX(1.083)">l</i><i style="left:191.19px;transform:scaleX(1.083)">l</i><i style="left:198.09px;transform:scaleX(1.064)">y</i><i style="left:220.46px;transform:scaleX(1.037)">p</i><i style="left:235.58px;transform:scaleX(1.045)">u</i><i style="left:250.70px;transform:scaleX(1.037)">b</i><i style="left:265.65px;transform:scaleX(1.083)">l</i><i style="left:272.19px;transform:scaleX(1.083)">i</i><i style="left:278.14px;transform:scaleX(0.991)">s</i><i style="left:291.22px;transform:scaleX(1.045)">h</i><i style="left:306.02px;transform:scaleX(1.014)">e</i><i style="left:320.69px;transform:scaleX(1.037)">d</i><i style="left:344.10px;transform:scaleX(1.083)">i</i><i style="left:351.42px;transform:scaleX(1.150)">t</i><i style="left:359.86px;transform:scaleX(1.014)">e</i><i style="left:375.28px;transform:scaleX(1.058)">m</i><i style="left:397.31px;transform:scaleX(0.991)">s</i><i style="left:418.68px;transform:scaleX(1.083)">i</i><i style="left:425.40px;transform:scaleX(1.045)">n</i><i style="left:448.98px;transform:scaleX(1.037)">d</i><i style="left:463.71px;transform:scaleX(1.018)">a</i><i style="left:479.16px;transform:scaleX(1.150)">t</i><i style="left:487.65px;transform:scaleX(1.018)">a</i><i style="left:502.38px;transform:scaleX(1.037)">b</i><i style="left:517.11px;transform:scaleX(1.018)">a</i><i style="left:531.20px;transform:scaleX(0.991)">s</i><i style="left:543.83px;transform:scaleX(1.014)">e</i></div>
<div class="t" style="left:759.48px;top:735.00px;font-size:25px;font-weight:normal;color:#000"><i style="left:-0.19px;transform:scaleX(0.989)">U</i><i style="left:17.57px;transform:scaleX(0.991)">s</i><i style="left:30.17px;transform:scaleX(1.014)">e</i><i style="left:53.25px;transform:scaleX(1.037)">q</i><i style="left:68.33px;transform:scaleX(1.045)">u</i><i style="left:83.09px;transform:scaleX(1.014)">e</i><i style="left:97.84px;transform:scaleX(1.045)">u</i><i style="left:112.60px;transform:scaleX(1.014)">e</i><i style="left:135.90px;transform:scaleX(1.102)">f</i><i style="left:143.87px;transform:scaleX(1.019)">o</i><i style="left:158.94px;transform:scaleX(1.101)">r</i><i style="left:175.96px;transform:scaleX(0.963)">C</i><i style="left:192.76px;transform:scaleX(0.965)">R</i><i style="left:210.02px;transform:scaleX(0.987)">L</i><i style="left:223.65px;transform:scaleX(0.991)">s</i></div>
<div class="t" style="left:687.57px;top:787.00px;font-size:25px;font-weight:normal;color:#000"><i style="left:-0.16px;transform:scaleX(0.989)">U</i><i style="left:17.66px;transform:scaleX(0.991)">s</i><i style="left:30.31px;transform:scaleX(1.014)">e</i><i style="left:53.48px;transform:scaleX(1.037)">q</i><i style="left:68.63px;transform:scaleX(1.045)">u</i><i style="left:83.44px;transform:scaleX(1.014)">e</i><i style="left:98.25px;transform:scaleX(1.045)">u</i><i style="left:113.06px;transform:scaleX(1.014)">e</i><i style="left:136.44px;transform:scaleX(1.102)">f</i><i style="left:144.46px;transform:scaleX(1.019)">o</i><i style="left:159.57px;transform:scaleX(1.101)">r</i><i style="left:177.31px;transform:scaleX(1.000)">c</i><i style="left:190.08px;transform:scaleX(1.014)">e</i><i style="left:205.12px;transform:scaleX(1.101)">r</i><i style="left:215.63px;transform:scaleX(1.150)">t</i><i style="left:224.34px;transform:scaleX(1.083)">i</i><i style="left:231.16px;transform:scaleX(1.102)">f</i><i style="left:239.37px;transform:scaleX(1.083)">i</i><i style="left:245.45px;transform:scaleX(1.000)">c</i><i style="left:258.26px;transform:scaleX(1.018)">a</i><i style="left:273.73px;transform:scaleX(1.150)">t</i><i style="left:282.18px;transform:scaleX(1.014)">e</i><i style="left:296.24px;transform:scaleX(0.991)">s</i></div>
<div class="t" style="left:713.28px;top:845.00px;font-size:32px;font-weight:bold;color:#66000A;-webkit-text-stroke:0.5px"><i style="left:-0.33px;transform:scaleX(0.981)">G</i><i style="left:25.29px;transform:scaleX(1.053)">e</i><i style="left:45.12px;transform:scaleX(1.042)">n</i><i style="left:66.69px;transform:scaleX(1.053)">e</i><i style="left:86.82px;transform:scaleX(1.091)">r</i><i style="left:101.74px;transform:scaleX(1.060)">a</i><i style="left:121.37px;transform:scaleX(1.063)">l</i><i style="left:141.19px;transform:scaleX(0.988)">S</i><i style="left:163.47px;transform:scaleX(1.053)">e</i><i style="left:183.97px;transform:scaleX(1.136)">t</i><i style="left:197.87px;transform:scaleX(1.136)">t</i><i style="left:210.78px;transform:scaleX(1.063)">i</i><i style="left:221.26px;transform:scaleX(1.042)">n</i><i style="left:242.51px;transform:scaleX(1.032)">g</i><i style="left:262.72px;transform:scaleX(0.990)">s</i></div>
<div class="t" style="left:861.37px;top:901.00px;font-size:25px;font-weight:normal;color:#000"><i style="left:0.20px;transform:scaleX(1.012)">D</i><i style="left:18.65px;transform:scaleX(1.014)">e</i><i style="left:32.61px;transform:scaleX(0.991)">s</i><i style="left:44.97px;transform:scaleX(1.000)">c</i><i style="left:58.33px;transform:scaleX(1.101)">r</i><i style="left:68.01px;transform:scaleX(1.083)">i</i><i style="left:74.54px;transform:scaleX(1.037)">p</i><i style="left:90.20px;transform:scaleX(1.150)">t</i><i style="left:98.87px;transform:scaleX(1.083)">i</i><i style="left:105.15px;transform:scaleX(1.019)">o</i><i style="left:119.94px;transform:scaleX(1.045)">n</i></div>
<div class="t" style="left:1042.40px;top:1001.00px;font-size:22px;font-weight:normal;color:#000;word-spacing:-1.5px;white-space:nowrap;transform:scaleX(1.0821);transform-origin:left"><span style="position:static">Save and Test Connection</span></div>
<div class="t" style="left:1355.00px;top:1001.00px;font-size:22px;font-weight:normal;color:#000;word-spacing:-1.5px;white-space:nowrap;transform:scaleX(0.9988);transform-origin:left"><span style="position:static">Save</span></div>
<div class="t" style="left:1479.80px;top:1001.00px;font-size:22px;font-weight:normal;color:#000;word-spacing:-1.5px;white-space:nowrap;transform:scaleX(1.0407);transform-origin:left"><span style="position:static">Cancel</span></div>
<div class="t" style="left:1074.25px;top:275.00px;font-size:25px;font-weight:normal;color:#000"><i style="left:-0.15px;transform:scaleX(0.989)">U</i><i style="left:17.69px;transform:scaleX(0.991)">s</i><i style="left:30.35px;transform:scaleX(1.014)">e</i></div>
<div class="t" style="left:1074.25px;top:327.00px;font-size:25px;font-weight:normal;color:#000"><i style="left:-0.15px;transform:scaleX(0.989)">U</i><i style="left:17.69px;transform:scaleX(0.991)">s</i><i style="left:30.35px;transform:scaleX(1.014)">e</i></div>
<div class="t" style="left:1074.25px;top:379.00px;font-size:25px;font-weight:normal;color:#000"><i style="left:-0.15px;transform:scaleX(0.989)">U</i><i style="left:17.69px;transform:scaleX(0.991)">s</i><i style="left:30.35px;transform:scaleX(1.014)">e</i></div>
<div class="t" style="left:1074.25px;top:459.00px;font-size:25px;font-weight:normal;color:#000"><i style="left:-0.15px;transform:scaleX(0.989)">U</i><i style="left:17.69px;transform:scaleX(0.991)">s</i><i style="left:30.35px;transform:scaleX(1.014)">e</i></div>
<div class="t" style="left:1074.25px;top:631.00px;font-size:25px;font-weight:normal;color:#000"><i style="left:-0.15px;transform:scaleX(0.989)">U</i><i style="left:17.69px;transform:scaleX(0.991)">s</i><i style="left:30.35px;transform:scaleX(1.014)">e</i></div>
<div class="t" style="left:1074.25px;top:683.00px;font-size:25px;font-weight:normal;color:#000"><i style="left:-0.15px;transform:scaleX(0.989)">U</i><i style="left:17.69px;transform:scaleX(0.991)">s</i><i style="left:30.35px;transform:scaleX(1.014)">e</i></div>
<div class="t" style="left:1074.25px;top:735.00px;font-size:25px;font-weight:normal;color:#000"><i style="left:-0.15px;transform:scaleX(0.989)">U</i><i style="left:17.69px;transform:scaleX(0.991)">s</i><i style="left:30.35px;transform:scaleX(1.014)">e</i></div>
<div class="t" style="left:1074.25px;top:787.00px;font-size:25px;font-weight:normal;color:#000"><i style="left:-0.15px;transform:scaleX(0.989)">U</i><i style="left:17.69px;transform:scaleX(0.991)">s</i><i style="left:30.35px;transform:scaleX(1.014)">e</i></div>
</body></html>
